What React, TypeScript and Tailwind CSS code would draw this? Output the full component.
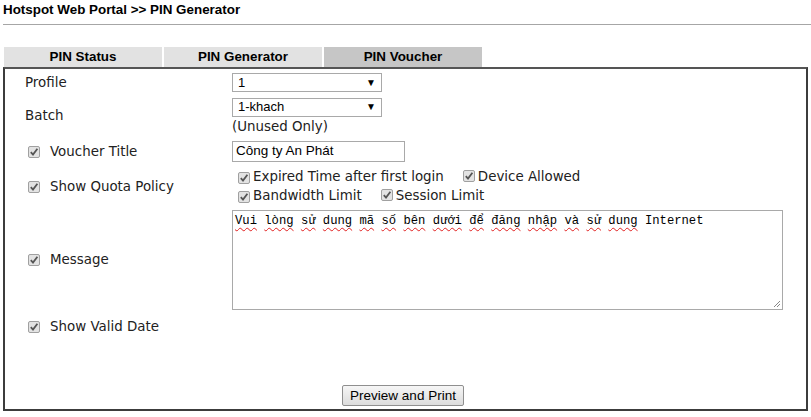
import React from "react";

const verd = { fontFamily: '"DejaVu Sans", Verdana, sans-serif' };
const arial = { fontFamily: '"Liberation Sans", Arial, sans-serif' };

function Check() {
  return (
    <span className="inline-flex w-[12px] h-[12px] border border-[#a0a0a0] bg-[#e3e3e3] rounded-[2px] items-center justify-center shrink-0">
      <svg width="10" height="10" viewBox="0 0 10 10">
        <path d="M1.8 5.2 L4 7.6 L8.4 1.8" stroke="#555" strokeWidth="1.8" fill="none" />
      </svg>
    </span>
  );
}

function Select({ value }: { value: string }) {
  return (
    <div
      className="w-[150px] h-[19px] border border-[#a9a9a9] bg-white flex items-center justify-between pl-[5px] pr-[5px] text-[13px] text-black"
      style={arial}
    >
      <span>{value}</span>
      <span className="text-[10px] leading-none">▼</span>
    </div>
  );
}

const words = ["Vui", "lòng", "sử", "dung", "mã", "số", "bên", "dưới", "để", "đăng", "nhập", "và", "sử", "dung"];

export default function App() {
  return (
    <div className="w-[811px] h-[417px] bg-white text-black overflow-hidden relative">
      <div className="pl-[3px] pt-[2px] h-[24px] text-[13.4px] font-bold leading-[16px]" style={arial}>
        Hotspot Web Portal &gt;&gt; PIN Generator
      </div>
      <div className="ml-[3px] h-[1px] bg-[#a6a6a6]" />
      <div className="h-[22px]" />
      <div className="flex pl-[4px] gap-[2px] h-[20px] text-[13.4px] font-bold" style={arial}>
        <div className="w-[158px] bg-[#e2e2e2] flex items-center justify-center">PIN Status</div>
        <div className="w-[158px] bg-[#e2e2e2] flex items-center justify-center">PIN Generator</div>
        <div className="w-[158px] bg-[#c6c6c6] flex items-center justify-center">PIN Voucher</div>
      </div>
      <div className="ml-[3px] w-[805px] h-[344px] border-2 border-[#3c3c3c] border-t-[#555] flex flex-col text-[13.4px] text-[#222]" style={verd}>
        {/* Profile */}
        <div className="flex items-center h-[25px] mt-[1px]">
          <div className="w-[227px] pl-[20px] pt-[2px]">Profile</div>
          <Select value="1" />
        </div>
        {/* Batch */}
        <div className="flex items-center h-[40px] mt-[1px]">
          <div className="w-[227px] pl-[20px]">Batch</div>
          <div className="flex flex-col">
            <Select value="1-khach" />
            <div className="leading-[17px] mt-[1px]">(Unused Only)</div>
          </div>
        </div>
        {/* Voucher Title */}
        <div className="flex items-center h-[23px] mt-[4px]">
          <div className="w-[227px] pl-[23px] pt-[2px] flex items-center gap-[10px]">
            <Check />
            <span>Voucher Title</span>
          </div>
          <div className="w-[173px] h-[21px] border border-[#a9a9a9] flex items-center pl-[3px] text-black text-[13.5px]" style={arial}>
            Công ty An Phát
          </div>
        </div>
        {/* Quota */}
        <div className="flex items-center h-[40px] mt-[4px]">
          <div className="w-[227px] pl-[23px] flex items-center gap-[10px]">
            <Check />
            <span>Show Quota Policy</span>
          </div>
          <div className="flex flex-col pl-[6px]">
            <div className="flex items-center h-[19px]">
              <Check />
              <span className="ml-[3px]">Expired Time after first login</span>
              <span className="ml-[19px]"><Check /></span>
              <span className="ml-[3px]">Device Allowed</span>
            </div>
            <div className="flex items-center h-[19px]">
              <Check />
              <span className="ml-[3px]">Bandwidth Limit</span>
              <span className="ml-[19px]"><Check /></span>
              <span className="ml-[3px]">Session Limit</span>
            </div>
          </div>
        </div>
        {/* Message */}
        <div className="flex items-center mt-[3px]">
          <div className="w-[227px] pl-[23px] flex items-center gap-[10px]">
            <Check />
            <span>Message</span>
          </div>
          <div
            className="relative w-[551px] h-[100px] border border-[#a9a9a9] pl-[2px] pt-[2px] text-[12.2px] leading-[16px] text-black"
            style={{ fontFamily: '"Liberation Mono", "DejaVu Sans Mono", monospace' }}
          >
            {words.map((w, i) => (
              <React.Fragment key={i}>
                <span className="underline decoration-wavy decoration-[#e02020] decoration-1 underline-offset-[3px]">{w}</span>{" "}
              </React.Fragment>
            ))}
            <span>Internet</span>
            <svg className="absolute right-[1px] bottom-[1px]" width="9" height="9" viewBox="0 0 9 9">
              <path d="M8 2 L2 8 M8 5 L5 8" stroke="#888" strokeWidth="1" />
            </svg>
          </div>
        </div>
        {/* Valid date */}
        <div className="flex items-center h-[25px] mt-[5px]">
          <div className="w-[227px] pl-[23px] flex items-center gap-[10px]">
            <Check />
            <span>Show Valid Date</span>
          </div>
        </div>
        <div className="flex-1" />
        <div className="flex justify-center mb-[3px] pr-[5px]">
          <button
            className="h-[21px] px-[7px] border border-[#8f8f8f] rounded-[2px] bg-gradient-to-b from-[#f6f6f6] to-[#dcdcdc] text-[13.5px] text-black leading-none"
            style={arial}
          >
            Preview and Print
          </button>
        </div>
      </div>
    </div>
  );
}
